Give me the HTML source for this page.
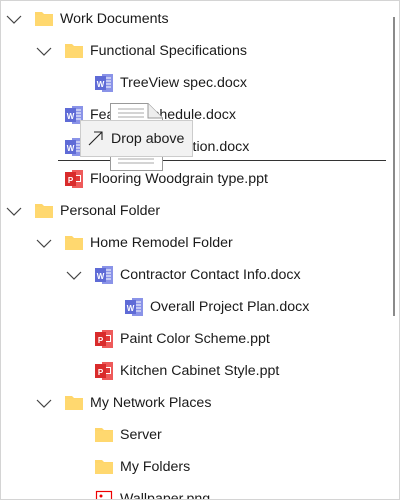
<!DOCTYPE html>
<html><head><style>
html,body{margin:0;padding:0;background:#fff;overflow:hidden}
body{width:400px;height:500px;position:relative;overflow:hidden;font-family:"Segoe UI","Liberation Sans",sans-serif;font-size:14.2px;color:#1a1a1a}
.frame{position:absolute;left:0;top:0;width:398px;height:498px;border:1px solid #d4d4d4}
.row{position:absolute;height:32px;line-height:34px;white-space:nowrap}
.row svg{position:absolute;top:7px}
.t{position:absolute;top:0}
</style></head><body>
<div class="frame"></div>
<div style="position:absolute;left:393px;top:17px;width:2px;height:299px;background:#8a8a8a"></div>

<svg width="0" height="0" style="position:absolute">
<defs>
<symbol id="chev" viewBox="0 0 20 20"><path d="M3 7 L10 14 L17 7" fill="none" stroke="#444" stroke-width="1.2"/></symbol>
<symbol id="fold" viewBox="0 0 20 20"><path d="M1 3 H8 L10 5 H19 V17 H1 Z" fill="#ffd66b"/><path d="M1 6 H19 V17 H1 Z" fill="#ffd86f"/></symbol>
<symbol id="word" viewBox="0 0 20 20"><rect x="8" y="1" width="11" height="18" fill="#8a93e8"/><path d="M11 5h6M11 8h6M11 11h6M11 14h6" stroke="#fff" stroke-width="1"/><rect x="1" y="3" width="11" height="14" fill="#5f6bd6"/><text x="6.5" y="14" font-size="8" font-family="Liberation Sans" font-weight="bold" fill="#fff" text-anchor="middle">W</text></symbol>
<symbol id="ppt" viewBox="0 0 20 20"><rect x="8" y="1" width="11" height="18" fill="#ee5a5a"/><rect x="11" y="6" width="6" height="7" fill="#fff"/><rect x="12" y="7" width="4" height="5" fill="#e03a3a"/><rect x="1" y="3" width="11" height="14" fill="#d92b2b"/><text x="6.5" y="14" font-size="8" font-family="Liberation Sans" font-weight="bold" fill="#fff" text-anchor="middle">P</text></symbol>
<symbol id="png" viewBox="0 0 20 20"><rect x="2.5" y="2.5" width="15" height="15" fill="#fff" stroke="#e00" stroke-width="1.2"/><circle cx="7" cy="7" r="1.5" fill="#e00"/><path d="M5 16 L10 10 L15 16Z" fill="#e00"/></symbol>
</defs></svg>

<div class="row" style="top:2px;left:0"><svg style="left:4px" width="20" height="20"><use href="#chev"/></svg><svg style="left:34px" width="20" height="20"><use href="#fold"/></svg><span class="t" style="left:60px">Work Documents</span></div>
<div class="row" style="top:34px;left:0"><svg style="left:34px" width="20" height="20"><use href="#chev"/></svg><svg style="left:64px" width="20" height="20"><use href="#fold"/></svg><span class="t" style="left:90px">Functional Specifications</span></div>
<div class="row" style="top:66px;left:0"><svg style="left:94px" width="20" height="20"><use href="#word"/></svg><span class="t" style="left:120px">TreeView spec.docx</span></div>
<div class="row" style="top:98px;left:0"><svg style="left:64px" width="20" height="20"><use href="#word"/></svg><span class="t" style="left:90px">Feature Schedule.docx</span></div>
<div class="row" style="top:130px;left:0"><svg style="left:64px" width="20" height="20"><use href="#word"/></svg><span class="t" style="left:90px">Resource Allocation.docx</span></div>
<div class="row" style="top:162px;left:0"><svg style="left:64px" width="20" height="20"><use href="#ppt"/></svg><span class="t" style="left:90px">Flooring Woodgrain type.ppt</span></div>
<div class="row" style="top:194px;left:0"><svg style="left:4px" width="20" height="20"><use href="#chev"/></svg><svg style="left:34px" width="20" height="20"><use href="#fold"/></svg><span class="t" style="left:60px">Personal Folder</span></div>
<div class="row" style="top:226px;left:0"><svg style="left:34px" width="20" height="20"><use href="#chev"/></svg><svg style="left:64px" width="20" height="20"><use href="#fold"/></svg><span class="t" style="left:90px">Home Remodel Folder</span></div>
<div class="row" style="top:258px;left:0"><svg style="left:64px" width="20" height="20"><use href="#chev"/></svg><svg style="left:94px" width="20" height="20"><use href="#word"/></svg><span class="t" style="left:120px">Contractor Contact Info.docx</span></div>
<div class="row" style="top:290px;left:0"><svg style="left:124px" width="20" height="20"><use href="#word"/></svg><span class="t" style="left:150px">Overall Project Plan.docx</span></div>
<div class="row" style="top:322px;left:0"><svg style="left:94px" width="20" height="20"><use href="#ppt"/></svg><span class="t" style="left:120px">Paint Color Scheme.ppt</span></div>
<div class="row" style="top:354px;left:0"><svg style="left:94px" width="20" height="20"><use href="#ppt"/></svg><span class="t" style="left:120px">Kitchen Cabinet Style.ppt</span></div>
<div class="row" style="top:386px;left:0"><svg style="left:34px" width="20" height="20"><use href="#chev"/></svg><svg style="left:64px" width="20" height="20"><use href="#fold"/></svg><span class="t" style="left:90px">My Network Places</span></div>
<div class="row" style="top:418px;left:0"><svg style="left:94px" width="20" height="20"><use href="#fold"/></svg><span class="t" style="left:120px">Server</span></div>
<div class="row" style="top:450px;left:0"><svg style="left:94px" width="20" height="20"><use href="#fold"/></svg><span class="t" style="left:120px">My Folders</span></div>
<div class="row" style="top:482px;left:0"><svg style="left:94px" width="20" height="20"><use href="#png"/></svg><span class="t" style="left:120px">Wallpaper.png</span></div>

<div style="position:absolute;left:58px;top:160px;width:328px;height:1px;background:#333"></div>

<svg style="position:absolute;left:110px;top:103px" width="54" height="68">
<path d="M0.5 0.5 H38 L52.5 15 V67.5 H0.5 Z" fill="#fff" stroke="#999"/>
<path d="M38 0.5 V15 H52.5" fill="#eee" stroke="#999"/>
<path d="M8 6h26M8 10h26M8 14h26M8 52h36M8 56h36M8 60h36" stroke="#aaa" stroke-width="1"/>
</svg>
<div style="position:absolute;left:80px;top:120px;width:113px;height:37px;background:#f2f2f2;border:1px solid #ccc;box-sizing:border-box"></div>
<svg style="position:absolute;left:87px;top:130px" width="18" height="18"><path d="M2 15 L15 2 M7 2 H15 V10" fill="none" stroke="#222" stroke-width="1.1"/></svg>
<div style="position:absolute;left:111px;top:129px;line-height:20px;font-size:14.2px">Drop above</div>
<div style="position:absolute;left:0;top:499px;width:400px;height:1px;background:#d4d4d4"></div>
</body></html>
